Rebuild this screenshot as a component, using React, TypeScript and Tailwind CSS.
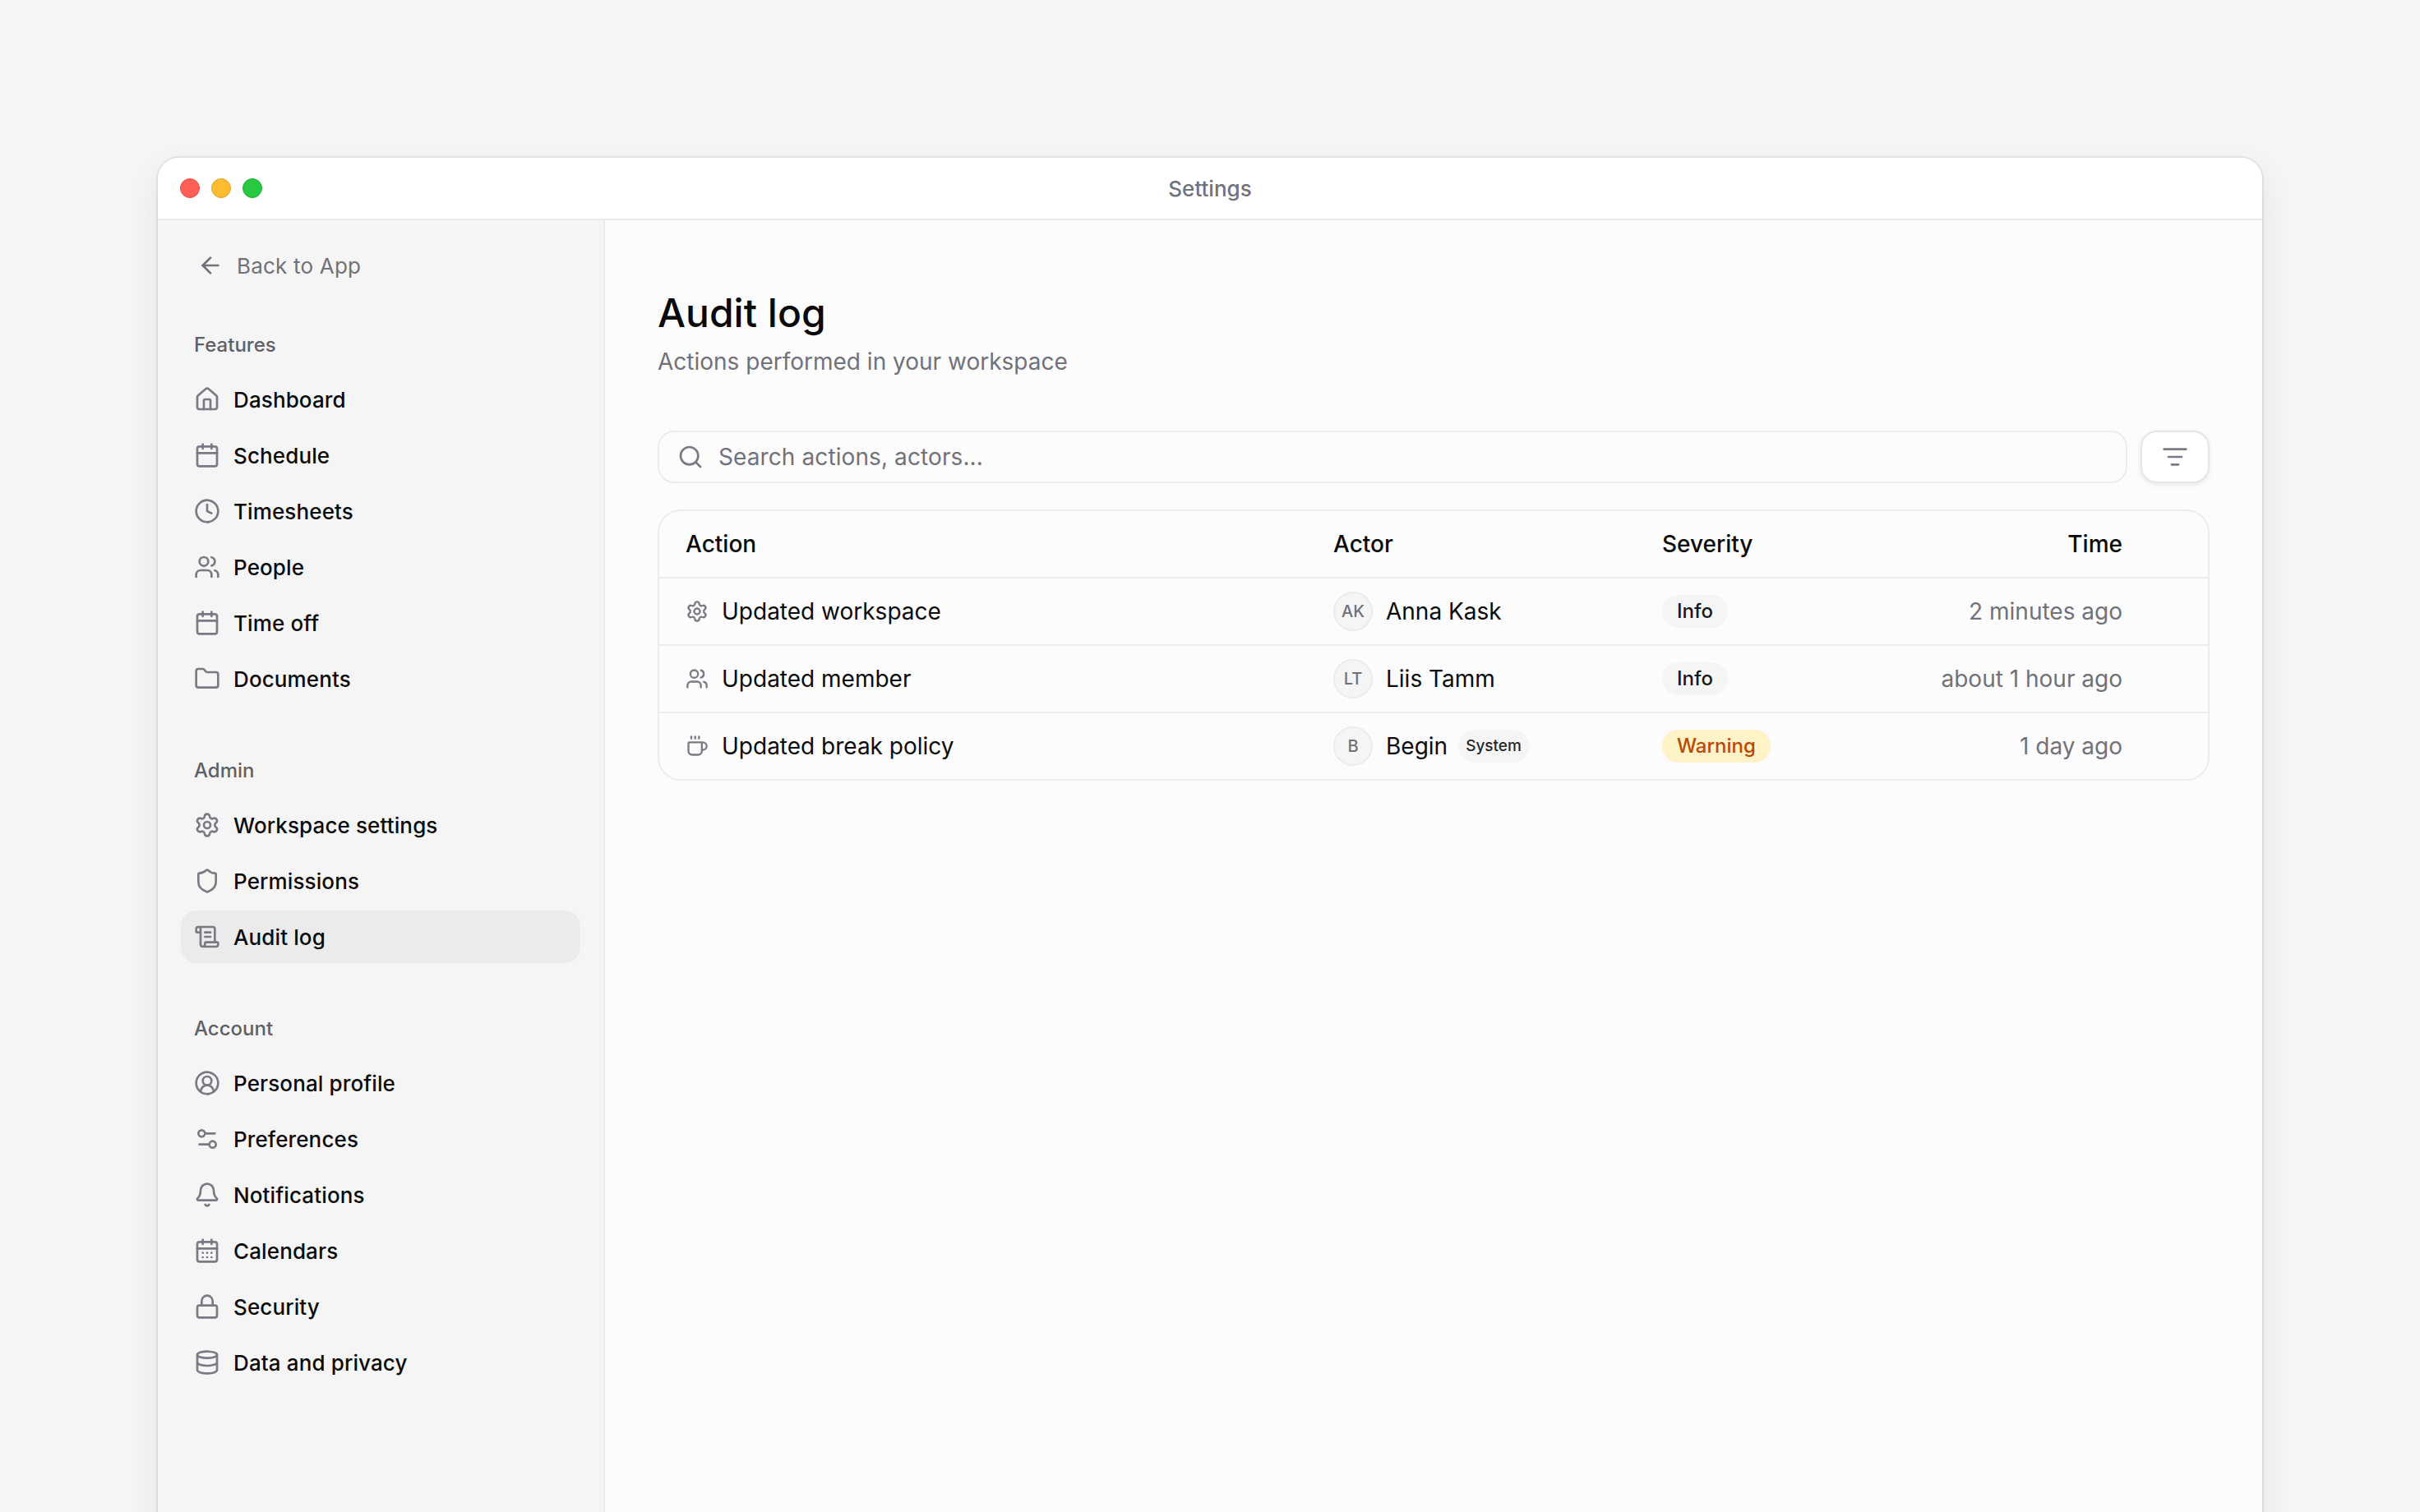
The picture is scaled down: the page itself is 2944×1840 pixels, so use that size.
import {
  ArrowLeft,
  Bell,
  Calendar,
  CalendarDays,
  CircleUserRound,
  Clock,
  Coffee,
  Database,
  Folder,
  House,
  ListFilter,
  Lock,
  ScrollText,
  Search,
  Settings,
  Settings2,
  Shield,
  Users,
  type LucideIcon,
} from 'lucide-react';

type NavEntry = { label: string; icon: LucideIcon; active?: boolean };

const sections: { title: string; items: NavEntry[] }[] = [
  {
    title: 'Features',
    items: [
      { label: 'Dashboard', icon: House },
      { label: 'Schedule', icon: Calendar },
      { label: 'Timesheets', icon: Clock },
      { label: 'People', icon: Users },
      { label: 'Time off', icon: Calendar },
      { label: 'Documents', icon: Folder },
    ],
  },
  {
    title: 'Admin',
    items: [
      { label: 'Workspace settings', icon: Settings },
      { label: 'Permissions', icon: Shield },
      { label: 'Audit log', icon: ScrollText, active: true },
    ],
  },
  {
    title: 'Account',
    items: [
      { label: 'Personal profile', icon: CircleUserRound },
      { label: 'Preferences', icon: Settings2 },
      { label: 'Notifications', icon: Bell },
      { label: 'Calendars', icon: CalendarDays },
      { label: 'Security', icon: Lock },
      { label: 'Data and privacy', icon: Database },
    ],
  },
];

const rows = [
  { action: 'Updated workspace', icon: Settings, initials: 'AK', actor: 'Anna Kask', severity: 'Info', time: '2 minutes ago' },
  { action: 'Updated member', icon: Users, initials: 'LT', actor: 'Liis Tamm', severity: 'Info', time: 'about 1 hour ago' },
  { action: 'Updated break policy', icon: Coffee, initials: 'B', actor: 'Begin', system: true, severity: 'Warning', time: '1 day ago' },
];

function Sidebar() {
  return (
    <aside className="w-[544px] shrink-0 border-r-2 border-[#ececec] bg-[#f5f5f5] pl-[28px] pr-[28px] pt-[23px]">
      <div className="flex h-[64px] items-center gap-[16px] pl-[20px] text-[26px] tracking-[0.2px] text-[#71717a]">
        <ArrowLeft size={32} strokeWidth={2} />
        <span>Back to App</span>
      </div>
      <div className="mt-[49px] flex flex-col gap-[64px]">
        {sections.map((section) => (
          <section key={section.title}>
            <h3 className="mb-[18px] flex h-[32px] items-center pl-[16px] text-[24px] font-medium text-[#5f5f68]">{section.title}</h3>
            <ul className="flex flex-col gap-[4px]">
              {section.items.map((item) => (
                <li
                  key={item.label}
                  className={`flex h-[64px] items-center gap-[16px] rounded-[20px] pl-[16px] text-[26px] font-medium tracking-[0.12px] text-[#0a0a0a] ${item.active ? 'bg-[#ebebeb]' : ''}`}
                >
                  <item.icon size={32} strokeWidth={2} className="text-[#7a7a85]" />
                  <span>{item.label}</span>
                </li>
              ))}
            </ul>
          </section>
        ))}
      </div>
    </aside>
  );
}

function Badge({ label }: { label: string }) {
  const warn = label === 'Warning';
  return (
    <span className={`flex h-[40px] items-center rounded-[20px] px-[18px] text-[24px] font-medium ${warn ? 'bg-[#fdf3c7] text-[#b94a00]' : 'bg-[#f5f5f5] text-[#18181b]'}`}>
      {label}
    </span>
  );
}

function AuditTable() {
  return (
    <div className="mt-[32px] rounded-[28px] border-2 border-[#ececec] text-[28px]">
      <div className="grid h-[80px] grid-cols-[788px_400px_1fr] items-center pl-[32px] pr-[104px] font-medium text-[#0a0a0a]">
        <div>Action</div>
        <div>Actor</div>
        <div className="flex justify-between">
          <span>Severity</span>
          <span>Time</span>
        </div>
      </div>
      {rows.map((row) => (
        <div key={row.action} className="grid h-[82px] grid-cols-[788px_400px_1fr] items-center border-t-2 border-[#ececec] pl-[32px] pr-[104px]">
          <div className="flex items-center gap-[16px] text-[#0a0a0a]">
            <row.icon size={28} strokeWidth={2} className="text-[#7a7a85]" />
            <span>{row.action}</span>
          </div>
          <div className="flex items-center gap-[16px] text-[#0a0a0a]">
            <span className="flex h-[48px] w-[48px] items-center justify-center rounded-full border-2 border-[#ececec] bg-[#f5f5f5] text-[20px] font-medium text-[#71717a]">
              {row.initials}
            </span>
            <span>{row.actor}</span>
            {row.system && (
              <span className="-ml-[3px] flex h-[40px] items-center rounded-[20px] bg-[#f5f5f5] px-[9px] text-[19px] font-medium text-[#27272a]">System</span>
            )}
          </div>
          <div className="flex items-center justify-between text-[#71717a]">
            <Badge label={row.severity} />
            <span>{row.time}</span>
          </div>
        </div>
      ))}
    </div>
  );
}

export default function App() {
  return (
    <div className="h-screen overflow-hidden bg-[#f5f5f5] px-[192px] pt-[192px] font-['Inter',sans-serif]">
      <div className="flex h-[1800px] flex-col overflow-hidden rounded-t-[26px] bg-white shadow-[0_0_0_2px_rgba(0,0,0,0.07),0_16px_40px_rgba(0,0,0,0.07)]">
        <header className="relative flex h-[76px] shrink-0 items-center justify-center border-b-2 border-[#ececec] bg-white">
          <div className="absolute left-[27px] top-[25px] flex gap-[14px]">
            <span className="h-[24px] w-[24px] rounded-full border border-[#e5504c] bg-[#ff5f57]" />
            <span className="h-[24px] w-[24px] rounded-full border border-[#e0a02b] bg-[#febc2e]" />
            <span className="h-[24px] w-[24px] rounded-full border border-[#20ad36] bg-[#28c840]" />
          </div>
          <span className="text-[26px] font-medium text-[#71717a]">Settings</span>
        </header>
        <div className="flex flex-1">
          <Sidebar />
          <main className="flex-1 bg-[#fcfcfc] pl-[64px] pr-[64px] pt-[80px]">
            <h1 className="text-[48px] font-medium leading-[66px] text-[#0a0a0a]">Audit log</h1>
            <p className="mt-[6px] text-[28px] leading-[40px] text-[#71717a]">Actions performed in your workspace</p>
            <div className="mt-[64px] flex gap-[16px]">
              <label className="flex h-[64px] flex-1 items-center gap-[18px] rounded-[20px] border-2 border-[#ececec] pl-[22px]">
                <Search size={32} strokeWidth={2} className="text-[#7a7a85]" />
                <input
                  placeholder="Search actions, actors..."
                  className="flex-1 bg-transparent text-[28px] tracking-[0.1px] outline-none placeholder:text-[#71717a]"
                />
              </label>
              <button className="flex h-[64px] w-[84px] items-center justify-center rounded-[20px] border-2 border-[#e5e5e5] bg-white shadow-[0_2px_6px_rgba(0,0,0,0.08)]">
                <ListFilter size={32} strokeWidth={2} className="text-[#7a7a85]" />
              </button>
            </div>
            <AuditTable />
          </main>
        </div>
      </div>
    </div>
  );
}
